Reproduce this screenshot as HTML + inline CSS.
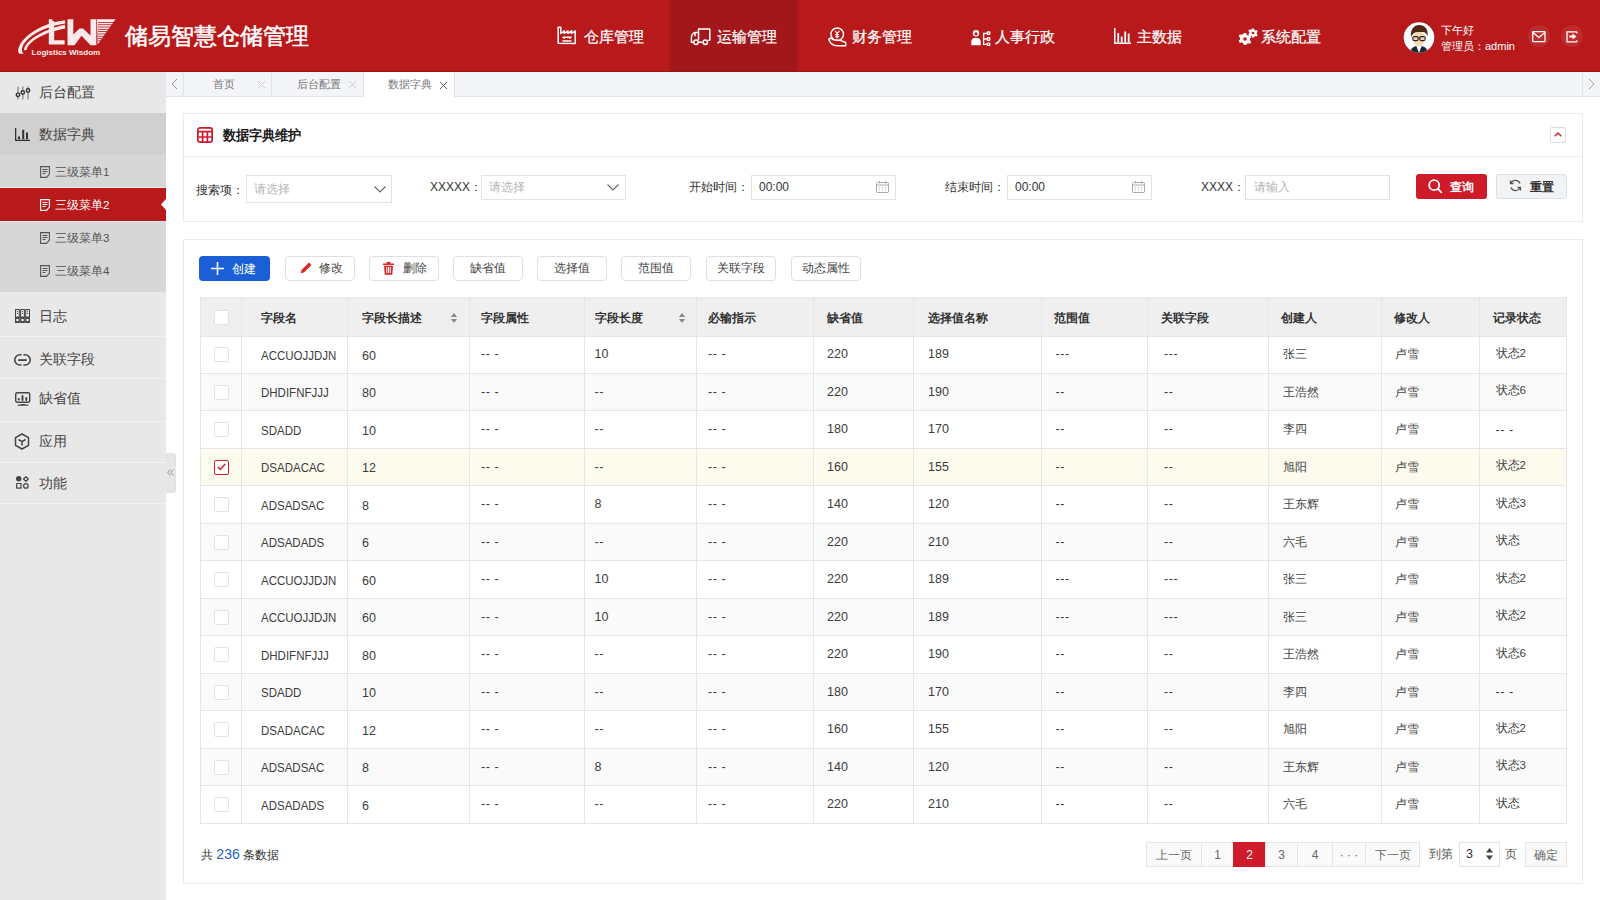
<!DOCTYPE html>
<html><head><meta charset="utf-8">
<style>
*{box-sizing:border-box;margin:0;padding:0}
html,body{width:1600px;height:900px;overflow:hidden;background:#fff;font-family:"Liberation Sans",sans-serif;color:#333}
.a{position:absolute;white-space:nowrap}
#hdr{position:absolute;left:0;top:0;width:1600px;height:72px;background:#b81a1c;border-bottom:1px solid #9c1315}
.navact{position:absolute;left:670px;top:0;width:128px;height:71px;background:#a2171a}
.nav{position:absolute;top:28px;height:18px;color:#fff;font-size:15px;line-height:18px;white-space:nowrap;-webkit-text-stroke:.25px #fff}
.ico{position:absolute;overflow:visible}
#side{position:absolute;left:0;top:72px;width:166px;height:828px;background:#e8e8e8}
.si{position:absolute;left:0;width:166px;color:#444;font-size:14px}
#tabs{position:absolute;left:166px;top:72px;width:1434px;height:25px;background:#f3f5f8;border-bottom:1px solid #e3e5e8}
.card{position:absolute;background:#fff;border:1px solid #ebebeb}
</style>
<style>
.sb{position:absolute;left:0;width:166px}
.st{position:absolute;left:39px;font-size:13.5px;line-height:16px;color:#444}
.sst{position:absolute;left:55px;font-size:11.6px;line-height:14px;color:#444}
.sep{position:absolute;left:0;width:166px;height:1px;background:#f3f3f3}
.tab{position:absolute;top:0;height:24px;border-right:1px solid #e1e4e8;font-size:10.5px;line-height:25px;color:#777}
.lbl{position:absolute;font-size:12px;line-height:14px;color:#333}
.inp{position:absolute;background:#fff;border:1px solid #e3e3e3}
.ph{position:absolute;font-size:12px;line-height:14px;color:#b5b5b5}
.btn{position:absolute;top:256px;width:70px;height:25px;border:1px solid #dcdfe6;border-radius:4px;background:#fff;font-size:11.5px;line-height:23px;color:#444;text-align:center}
.th{position:absolute;font-size:12px;line-height:14px;color:#333;font-weight:bold}
.td{position:absolute;font-size:12.5px;line-height:14px;color:#3c3c3c}
.tdc{position:absolute;font-size:11.5px;line-height:14px;color:#444}
.vl{position:absolute;width:1px;background:#e6e6e6}
.hl{position:absolute;height:1px;background:#e6e6e6}
.cb{position:absolute;left:214px;width:15px;height:15px;border:1px solid #e3e3e3;border-radius:2px;background:#fff}
.pg{position:absolute;top:842px;height:25px;border:1px solid #e6e6e6;background:#fafafa;font-size:12px;line-height:25px;color:#666;text-align:center}
</style>
</head><body>
<div id="hdr">
  <div class="navact"></div>
  <!-- logo -->
  <svg class="ico" style="left:10px;top:10px" width="115" height="52" viewBox="0 0 115 52">
    <g fill="#fbeaea">
      <path d="M38.8 9.3h3.6v1.6h1.8V30.2h10.4v4.3H38.8z"/>
      <path d="M57.5 9.3H63.3V24.5L69.5 18.5H73L80.5 25.5V9.3H86.3V35.2H80.5L71.5 25.8L64.5 35.2H57.5Z"/>
      <path d="M87 9.3h18.5L87.7 34.6z"/>
      <path d="M9.4 43.8C3.5 37 20 15 55 10.2l.3 3.4C26 18 9.5 33 12.4 42.2c.5 1 1.5 1.6 2.8 1.6z"/>
      <path d="M14.2 40.6C13 33 30 20 55 14.8l.3 3.6C34 22 17.2 32.5 16.8 39.8z"/>
    </g>
    <g fill="#b81a1c">
      <rect x="88" y="12" width="18" height="0.8"/><rect x="88" y="14.3" width="18" height="0.8"/><rect x="88" y="16.6" width="18" height="0.8"/>
      <rect x="88" y="18.9" width="18" height="0.8"/><rect x="88" y="21.2" width="18" height="0.8"/><rect x="88" y="23.5" width="18" height="0.8"/>
      <rect x="88" y="25.8" width="18" height="0.8"/><rect x="88" y="28.1" width="18" height="0.8"/><rect x="88" y="30.4" width="18" height="0.8"/>
    </g>
    <text x="21.6" y="44.6" fill="#fbeaea" font-family="Liberation Sans" font-weight="bold" font-size="8" textLength="68.6" lengthAdjust="spacingAndGlyphs">Logistics Wisdom</text>
  </svg>
  <div class="a" style="left:125px;top:21.5px;font-size:23.2px;line-height:28px;color:#fff;-webkit-text-stroke:.5px #fff">储易智慧仓储管理</div>

  <!-- nav: 仓库管理 -->
  <svg class="ico" style="left:557px;top:26px" width="20" height="19" viewBox="0 0 20 19" fill="none" stroke="#fff" stroke-width="1.5" stroke-linejoin="round">
    <path d="M1.2 17.3V1.2h2.6v6.3l3.6-2.6v2.6l3.6-2.6v2.6l3.6-2.6v2.6l3.6-2.6v12.5z"/><path d="M5.5 11.3h9M5.5 15h9M7 11.3v1.5M13 11.3v1.5"/>
  </svg>
  <div class="nav" style="left:584px">仓库管理</div>
  <!-- 运输管理 -->
  <svg class="ico" style="left:690px;top:28px" width="21" height="18" viewBox="0 0 21 18" fill="none" stroke="#fff" stroke-width="1.5" stroke-linejoin="round">
    <path d="M8.5 12.2V1h11.3v11.2h-1.5"/><path d="M8.5 4.5H5.2C2.8 4.8 1.4 7.5 1.4 10v4.2h2"/><path d="M8.8 14.2h3.6"/><circle cx="6" cy="14.2" r="2.2"/><circle cx="15.3" cy="14.2" r="2.2"/><path d="M5 4.8v3.5"/>
  </svg>
  <div class="nav" style="left:717px">运输管理</div>
  <!-- 财务管理 -->
  <svg class="ico" style="left:827px;top:27px" width="20" height="20" viewBox="0 0 20 20" fill="none" stroke="#fff" stroke-width="1.4" stroke-linejoin="round">
    <circle cx="10.2" cy="7.3" r="6.3"/><path d="M8 3.8l2.2 2.7 2.2-2.7M10.2 6.5v5M8.3 7.6h3.8M8.3 9.6h3.8" stroke-width="1.1"/>
    <path d="M1.8 12.2C3.2 16.6 6.2 18.7 10.5 18.7h8.2v-3.2l-5.5-2.2h-2.4C7.4 13.3 5.3 12.7 3.6 11z" fill="#b81a1c"/>
  </svg>
  <div class="nav" style="left:852px">财务管理</div>
  <!-- 人事行政 -->
  <svg class="ico" style="left:971px;top:28.5px" width="20" height="17" viewBox="0 0 20 17" fill="#fff">
    <circle cx="5" cy="4.3" r="3.2"/><circle cx="5" cy="4.8" r="1.6" fill="#b81a1c"/><path d="M.3 16.3v-3.8C.3 10.3 2 8.8 5 8.8s4.7 1.5 4.7 3.7v3.8z"/>
    <path d="M12.6 4.5h3M12.6 3.8v11.6h3M12.6 10h3" fill="none" stroke="#fff" stroke-width="1.3"/>
    <rect x="15.6" y="2.2" width="3.8" height="3.8" rx="1"/><rect x="15.6" y="8.1" width="3.8" height="3.8" rx="1"/><rect x="15.6" y="13.4" width="3.8" height="3.6" rx="1"/>
    <g fill="#b81a1c"><circle cx="17.5" cy="4.1" r=".7"/><circle cx="17.5" cy="10" r=".7"/><circle cx="17.5" cy="15.2" r=".7"/></g>
  </svg>
  <div class="nav" style="left:995px">人事行政</div>
  <!-- 主数据 -->
  <svg class="ico" style="left:1114px;top:28px" width="17" height="16" viewBox="0 0 17 16" fill="#fff">
    <rect x="0" y="0" width="1.5" height="16"/><rect x="0" y="14.5" width="17" height="1.5"/>
    <rect x="3.3" y="5" width="1.8" height="9.5"/><rect x="6.8" y="8.5" width="1.8" height="6"/><rect x="10.3" y="3.5" width="1.8" height="11"/><rect x="13.8" y="5.5" width="1.8" height="9"/>
  </svg>
  <div class="nav" style="left:1137px">主数据</div>
  <!-- 系统配置 -->
  <svg class="ico" style="left:1239px;top:28px" width="19" height="17" viewBox="0 0 19 17" fill="#fff">
    <g transform="translate(6,11)"><path d="M-1.2-6h2.4l.5 1.8 1.6.9 1.8-.6 1.2 2.1-1.3 1.3v1.9l1.3 1.3-1.2 2.1-1.8-.6-1.6.9L1.2 6h-2.4l-.5-1.8-1.6-.9-1.8.6-1.2-2.1 1.3-1.3v-1.9l-1.3-1.3 1.2-2.1 1.8.6 1.6-.9z"/><circle r="1.8" fill="#b81a1c"/></g>
    <g transform="translate(14,5) scale(.75)"><path d="M-1.2-6h2.4l.5 1.8 1.6.9 1.8-.6 1.2 2.1-1.3 1.3v1.9l1.3 1.3-1.2 2.1-1.8-.6-1.6.9L1.2 6h-2.4l-.5-1.8-1.6-.9-1.8.6-1.2-2.1 1.3-1.3v-1.9l-1.3-1.3 1.2-2.1 1.8.6 1.6-.9z"/><circle r="1.8" fill="#b81a1c"/></g>
  </svg>
  <div class="nav" style="left:1261px">系统配置</div>

  <!-- user -->
  <svg class="ico" style="left:1403px;top:21px" width="32" height="33" viewBox="0 0 32 33">
    <defs><clipPath id="avc"><circle cx="16" cy="16.5" r="15.3"/></clipPath></defs>
    <circle cx="16" cy="16.5" r="16" fill="#a8161a"/>
    <circle cx="16" cy="16.5" r="15.3" fill="#fff"/>
    <g clip-path="url(#avc)">
      <path d="M7.5 33C7.5 27 10.5 24.8 16 24.8S24.5 27 24.5 33z" fill="#1b2633"/><path d="M13.2 24.8L16 32l2.8-7.2z" fill="#fff"/>
    </g>
    <ellipse cx="16" cy="17.8" rx="6" ry="7" fill="#f4d8b0"/>
    <path d="M8 16C7 8.5 11 4 16.3 4 21.8 4 25.5 8 24.6 15.5 23.8 12.5 22 10.8 19 11 16 11.2 12.5 10.5 10.3 12.8 9.3 13.8 8.6 14.8 8 16z" fill="#4a2a15"/>
    <g fill="none" stroke="#222" stroke-width="1.1"><rect x="9.8" y="15.6" width="5.4" height="4" rx="1.5"/><rect x="16.8" y="15.6" width="5.4" height="4" rx="1.5"/><path d="M15.2 17h1.6"/></g>
  </svg>
  <div class="a" style="left:1441px;top:23px;font-size:11px;line-height:14px;color:#fff">下午好</div>
  <div class="a" style="left:1441px;top:39px;font-size:11px;line-height:14px;color:#fff">管理员：admin</div>
  <div class="a" style="left:1528px;top:25px;width:22px;height:22px;border-radius:50%;background:rgba(255,255,255,.08)"></div>
  <svg class="ico" style="left:1532px;top:30.5px" width="14" height="11.5" viewBox="0 0 14 11.5" fill="none" stroke="#fff" stroke-width="1.3"><rect x=".7" y=".7" width="12.3" height="10" rx=".6"/><path d="M1 1.6l5.9 5 5.9-5"/></svg>
  <div class="a" style="left:1561px;top:25px;width:22px;height:22px;border-radius:50%;background:rgba(255,255,255,.08)"></div>
  <svg class="ico" style="left:1566px;top:30.5px" width="12" height="12" viewBox="0 0 12 12"><path d="M10.8 .8H1v10h9.8M10.8 .8v1.6M10.8 9.2v1.6" fill="none" stroke="#fff" stroke-width="1.3"/><path d="M3.2 4.4h3.3V2.6l4 2.9-4 2.9V6.6H3.2z" fill="#fff"/></svg>
</div>


<div id="side"></div>
<div class="sb" style="top:113px;height:41px;background:#d0d0d0"></div>
<div class="sb" style="top:154px;height:138px;background:#d7d7d7"></div>
<div class="sb" style="top:188px;height:33px;background:#b81a1c"></div>
<div class="sb" style="top:187px;height:1px;background:#e2ebe8"></div>
<div class="sb" style="top:221px;height:1px;background:#e2ebe8"></div>
<svg class="ico" style="left:161px;top:199px" width="5" height="11"><path d="M5 0L0 5.5 5 11z" fill="#fff"/></svg>
<div class="sep" style="top:336px"></div>
<div class="sep" style="top:378px"></div>
<div class="sep" style="top:421px"></div>
<div class="sep" style="top:462px"></div>
<div class="sep" style="top:503px"></div>
<div class="sb" style="top:154px;height:1px;background:#d4d4d4"></div>
<svg class="ico" style="left:16px;top:85.5px" width="14" height="14" viewBox="0 0 14 14" fill="none" stroke-width="1.3">
<path d="M2 .5v13M6.8 .5v13M12 .5v13" stroke="#888"/><g stroke="#333" stroke-width="1.4" fill="#e8e8e8"><circle cx="2" cy="8.8" r="1.7"/><circle cx="6.8" cy="6.5" r="1.7"/><circle cx="12" cy="4.5" r="1.7"/></g></svg>
<div class="st" style="top:85px">后台配置</div>
<svg class="ico" style="left:15px;top:127.5px" width="15" height="13" viewBox="0 0 15 13" fill="#333">
<rect x="0" y="0" width="1.3" height="13"/><rect x="0" y="11.7" width="15" height="1.3"/><rect x="3" y="8.5" width="2" height="2.6"/><rect x="7.2" y="1.8" width="2" height="9.4"/><rect x="11" y="4.5" width="2" height="6.7"/></svg>
<div class="st" style="top:127px">数据字典</div>
<svg class="ico" style="left:40px;top:166px" width="10" height="12" viewBox="0 0 10 12" fill="none" stroke="#555" stroke-width="1.1"><path d="M.6.6h8.8v7.5L6.6 11.4H.6z"/><path d="M2.5 3.5h5M2.5 5.5h5M2.5 7.5h3"/></svg>
<div class="sst" style="top:165px;color:#555">三级菜单1</div>
<svg class="ico" style="left:40px;top:199px" width="10" height="12" viewBox="0 0 10 12" fill="none" stroke="#fff" stroke-width="1.1"><path d="M.6.6h8.8v7.5L6.6 11.4H.6z"/><path d="M2.5 3.5h5M2.5 5.5h5M2.5 7.5h3"/></svg>
<div class="sst" style="top:198px;color:#fff">三级菜单2</div>
<svg class="ico" style="left:40px;top:232px" width="10" height="12" viewBox="0 0 10 12" fill="none" stroke="#555" stroke-width="1.1"><path d="M.6.6h8.8v7.5L6.6 11.4H.6z"/><path d="M2.5 3.5h5M2.5 5.5h5M2.5 7.5h3"/></svg>
<div class="sst" style="top:231px;color:#555">三级菜单3</div>
<svg class="ico" style="left:40px;top:265px" width="10" height="12" viewBox="0 0 10 12" fill="none" stroke="#555" stroke-width="1.1"><path d="M.6.6h8.8v7.5L6.6 11.4H.6z"/><path d="M2.5 3.5h5M2.5 5.5h5M2.5 7.5h3"/></svg>
<div class="sst" style="top:264px;color:#555">三级菜单4</div>
<svg class="ico" style="left:15px;top:309px" width="15" height="14" viewBox="0 0 15 14">
<g fill="#444"><rect x="0" y="0" width="4.8" height="14" rx=".6"/><rect x="5.1" y="0" width="4.8" height="14" rx=".6"/><rect x="10.2" y="0" width="4.8" height="14" rx=".6"/></g>
<g fill="#fff"><rect x="1.1" y="1.1" width="2.6" height="6.4"/><rect x="6.2" y="1.1" width="2.6" height="6.4"/><rect x="11.3" y="1.1" width="2.6" height="6.4"/>
<circle cx="2.4" cy="11" r="1.2"/><circle cx="7.5" cy="11" r="1.2"/><circle cx="12.6" cy="11" r="1.2"/></g>
<g fill="#444"><circle cx="2.4" cy="2.6" r=".6"/><circle cx="2.4" cy="4.4" r=".6"/><circle cx="7.5" cy="2.6" r=".6"/><circle cx="7.5" cy="4.4" r=".6"/><circle cx="12.6" cy="2.6" r=".6"/><circle cx="12.6" cy="4.4" r=".6"/></g></svg>
<div class="st" style="top:309px">日志</div>
<svg class="ico" style="left:14px;top:354px" width="17" height="12" viewBox="0 0 17 12" fill="none" stroke="#444" stroke-width="1.6">
<path d="M7.6 .8H5.9a5.1 5.1 0 0 0 0 10.2H7.6M9.4 .8h1.7a5.1 5.1 0 0 1 0 10.2H9.4"/><path d="M4.2 6.1h8.6" stroke-width="1.8"/></svg>
<div class="st" style="top:352px">关联字段</div>
<svg class="ico" style="left:14px;top:391px" width="17" height="16" viewBox="0 0 17 16" fill="none" stroke="#444" stroke-width="1.4" stroke-linecap="round">
<rect x="1.7" y="1.7" width="14" height="9.6" rx="1.6"/><path d="M4.8 8v.6M8.5 5v4M12.3 7v2" stroke-width="2"/><path d="M4.2 14.2h9.6" stroke-width="1.2"/><path d="M7.5 13.5h3" stroke-width="1"/></svg>
<div class="st" style="top:391px">缺省值</div>
<svg class="ico" style="left:14px;top:433px" width="16" height="17" viewBox="0 0 16 17" fill="none" stroke="#444" stroke-width="1.5" stroke-linejoin="round">
<path d="M8 1l6.5 3.7v7.6L8 16 1.5 12.3V4.7z"/><path d="M4.5 6.5L8 8.6l3.5-2.1M8 8.6v4"/></svg>
<div class="st" style="top:434px">应用</div>
<svg class="ico" style="left:16px;top:476px" width="13" height="13" viewBox="0 0 13 13" fill="none" stroke="#444" stroke-width="1.2" stroke-linejoin="round">
<circle cx="2.7" cy="2.8" r="2.7" fill="#444" stroke="none"/><path d="M9.9 .7l2.4 2.3-2.4 2.3L7.5 3z"/><rect x=".7" y="7.5" width="4.3" height="4.6"/><circle cx="9.9" cy="9.9" r="2.3"/></svg>
<div class="st" style="top:476px">功能</div>
<div class="a" style="left:166px;top:453px;width:10px;height:40px;background:#e6e6e6;border-radius:0 3px 3px 0;border:1px solid #e2e2e2;border-left:none"></div>
<svg class="ico" style="left:167px;top:469px" width="7" height="7" viewBox="0 0 7 7" fill="none" stroke="#888" stroke-width=".9"><path d="M3.5 .5L.8 3.5l2.7 3M6.5 .5L3.8 3.5l2.7 3"/></svg>
<div id="tabs">
<div class="tab" style="left:0;width:18px"></div>
<svg class="ico" style="left:5px;top:6px" width="7" height="12" viewBox="0 0 7 12" fill="none" stroke="#999" stroke-width="1"><path d="M6 1L1 6l5 5"/></svg>
<div class="tab" style="left:18px;width:88px"><span class="a" style="left:29px">首页</span><svg class="ico" style="left:74px;top:9px" width="7" height="7" viewBox="0 0 8 8" stroke="#c8c8c8" stroke-width="1"><path d="M0 0L8 8M8 0L0 8"/></svg></div>
<div class="tab" style="left:106px;width:92px"><span class="a" style="left:25px">后台配置</span><svg class="ico" style="left:77px;top:9px" width="7" height="7" viewBox="0 0 8 8" stroke="#c8c8c8" stroke-width="1"><path d="M0 0L8 8M8 0L0 8"/></svg></div>
<div class="tab" style="left:198px;width:91px;background:#fff;height:25px"><span class="a" style="left:24px">数据字典</span><svg class="ico" style="left:76px;top:10px" width="7" height="7" viewBox="0 0 8 8" stroke="#555" stroke-width="1.1"><path d="M0 0L8 8M8 0L0 8"/></svg></div>
<div class="tab" style="left:1416px;width:18px;border-left:1px solid #e1e4e8;border-right:none"></div>
<svg class="ico" style="left:1422px;top:6px" width="7" height="12" viewBox="0 0 7 12" fill="none" stroke="#999" stroke-width="1"><path d="M1 1l5 5-5 5"/></svg>
</div>
<div class="card" style="left:183px;top:113px;width:1400px;height:109px"></div>
<div class="hl" style="left:184px;top:156px;width:1398px;background:#ececec"></div>
<svg class="ico" style="left:196.5px;top:127px" width="16" height="16" viewBox="0 0 16 16" fill="none" stroke="#d3172b" stroke-width="1.7">
<rect x=".85" y=".85" width="14.3" height="14.3" rx="2.2"/><path d="M.85 4.6h14.3M.85 10h14.3M5.6 4.6v10.5M10.4 4.6v10.5"/></svg>
<div class="a" style="left:223px;top:126.5px;font-size:13.1px;line-height:16px;color:#1a1a1a;font-weight:bold;transform:scaleY(1.06);transform-origin:0 0">数据字典维护</div>
<div class="a" style="left:1550px;top:127px;width:16px;height:16px;border:1px solid #dcdcdc;border-radius:2px"></div>
<svg class="ico" style="left:1554px;top:132px" width="8" height="5" viewBox="0 0 8 5" fill="none" stroke="#d0212b" stroke-width="1.4"><path d="M.7 4.3L4 1l3.3 3.3"/></svg>
<div class="lbl" style="left:196px;top:183px">搜索项：</div>
<div class="inp" style="left:246px;top:175px;width:146px;height:28px"></div>
<div class="ph" style="left:254px;top:182px">请选择</div>
<svg class="ico" style="left:374px;top:186px" width="12" height="7" viewBox="0 0 12 7" fill="none" stroke="#666" stroke-width="1.1"><path d="M.5.5L6 6 11.5.5"/></svg>
<div class="lbl" style="left:430px;top:180px">XXXXX：</div>
<div class="inp" style="left:481px;top:175px;width:145px;height:25px"></div>
<div class="ph" style="left:489px;top:180px">请选择</div>
<svg class="ico" style="left:607px;top:184px" width="12" height="7" viewBox="0 0 12 7" fill="none" stroke="#666" stroke-width="1.1"><path d="M.5.5L6 6 11.5.5"/></svg>
<div class="lbl" style="left:689px;top:180px">开始时间：</div>
<div class="inp" style="left:751px;top:175px;width:145px;height:25px"></div>
<div class="a" style="left:759px;top:180px;font-size:12px;line-height:14px;color:#333">00:00</div>
<svg class="ico" style="left:876px;top:181px" width="13" height="12" viewBox="0 0 13 12" fill="none" stroke="#aaa" stroke-width="1"><rect x=".5" y="1.5" width="12" height="10" rx="1"/><path d="M.5 4h12M3.5 0v2.5M9.5 0v2.5"/><path d="M3 6.5h1M6 6.5h1M9 6.5h1M3 9h1M6 9h1M9 9h1" stroke-width=".9"/></svg>
<div class="lbl" style="left:945px;top:180px">结束时间：</div>
<div class="inp" style="left:1007px;top:175px;width:145px;height:25px"></div>
<div class="a" style="left:1015px;top:180px;font-size:12px;line-height:14px;color:#333">00:00</div>
<svg class="ico" style="left:1132px;top:181px" width="13" height="12" viewBox="0 0 13 12" fill="none" stroke="#aaa" stroke-width="1"><rect x=".5" y="1.5" width="12" height="10" rx="1"/><path d="M.5 4h12M3.5 0v2.5M9.5 0v2.5"/><path d="M3 6.5h1M6 6.5h1M9 6.5h1M3 9h1M6 9h1M9 9h1" stroke-width=".9"/></svg>
<div class="lbl" style="left:1201px;top:180px">XXXX：</div>
<div class="inp" style="left:1245px;top:175px;width:145px;height:25px"></div>
<div class="ph" style="left:1254px;top:180px">请输入</div>
<div class="a" style="left:1416px;top:174px;width:71px;height:25px;background:#cf1a2a;border-radius:3px"></div>
<svg class="ico" style="left:1428px;top:179px" width="15" height="15" viewBox="0 0 15 15" fill="none" stroke="#fff" stroke-width="1.8"><circle cx="6.2" cy="6.2" r="5"/><path d="M9.8 9.8L13.8 13.8"/></svg>
<div class="a" style="left:1450px;top:180px;font-size:12px;line-height:14px;color:#fff;font-weight:bold">查询</div>
<div class="a" style="left:1496px;top:174px;width:71px;height:25px;background:#f2f3f5;border:1px solid #dcdfe3;border-radius:3px"></div>
<svg class="ico" style="left:1509px;top:179px" width="13" height="13" viewBox="0 0 13 13" fill="none" stroke="#555" stroke-width="1.3"><path d="M11 4.5A5 5 0 0 0 2 4M2 8.5A5 5 0 0 0 11 9"/><path d="M1.5 1.5V4.5H4.5M11.5 11.5V8.5H8.5"/></svg>
<div class="a" style="left:1530px;top:180px;font-size:12px;line-height:14px;color:#333;font-weight:bold">重置</div>
<div class="card" style="left:183px;top:239px;width:1400px;height:645px"></div>
<div class="a" style="left:199px;top:256px;width:71px;height:25px;background:#1a5fd6;border-radius:4px"></div>
<svg class="ico" style="left:211px;top:262px" width="13" height="13" viewBox="0 0 13 13" fill="none" stroke="#fff" stroke-width="1.6"><path d="M6.5 0v13M0 6.5h13"/></svg>
<div class="a" style="left:232px;top:262px;font-size:11.5px;line-height:14px;color:#fff">创建</div>
<div class="btn" style="left:284.5px;text-align:left;padding-left:33px">修改</div>
<div class="btn" style="left:368.5px;text-align:left;padding-left:33px">删除</div>
<div class="btn" style="left:452.5px">缺省值</div>
<div class="btn" style="left:536.5px">选择值</div>
<div class="btn" style="left:621px">范围值</div>
<div class="btn" style="left:706px">关联字段</div>
<div class="btn" style="left:790.5px">动态属性</div>
<svg class="ico" style="left:300px;top:262px" width="12" height="12" viewBox="0 0 12 12"><path d="M9 .5l2.5 2.5L4 10.5 .8 11.2 1.5 8z" fill="#d42a2a"/></svg>
<svg class="ico" style="left:383px;top:262px" width="11" height="13" viewBox="0 0 11 13" fill="#d42a2a"><rect x="0" y="1.5" width="11" height="1.5"/><rect x="3.5" y="0" width="4" height="2"/><path d="M1 3.8h9l-.7 9H1.7z"/><g fill="#fff"><rect x="3.3" y="5" width="1" height="6"/><rect x="5" y="5" width="1" height="6"/><rect x="6.7" y="5" width="1" height="6"/></g></svg>
<div class="a" style="left:200px;top:297px;width:1366px;height:39px;background:#efefef"></div>
<div class="a" style="left:200px;top:336.00px;width:1366px;height:37.48px;background:#fff"></div>
<div class="a" style="left:200px;top:373.48px;width:1366px;height:37.48px;background:#fafafa"></div>
<div class="a" style="left:200px;top:410.97px;width:1366px;height:37.48px;background:#fff"></div>
<div class="a" style="left:200px;top:448.45px;width:1366px;height:37.48px;background:#fcfbee"></div>
<div class="a" style="left:200px;top:485.94px;width:1366px;height:37.48px;background:#fff"></div>
<div class="a" style="left:200px;top:523.42px;width:1366px;height:37.48px;background:#fafafa"></div>
<div class="a" style="left:200px;top:560.91px;width:1366px;height:37.48px;background:#fff"></div>
<div class="a" style="left:200px;top:598.39px;width:1366px;height:37.48px;background:#fafafa"></div>
<div class="a" style="left:200px;top:635.88px;width:1366px;height:37.48px;background:#fff"></div>
<div class="a" style="left:200px;top:673.36px;width:1366px;height:37.48px;background:#fafafa"></div>
<div class="a" style="left:200px;top:710.85px;width:1366px;height:37.48px;background:#fff"></div>
<div class="a" style="left:200px;top:748.33px;width:1366px;height:37.48px;background:#fafafa"></div>
<div class="a" style="left:200px;top:785.82px;width:1366px;height:37.48px;background:#fff"></div>
<div class="hl" style="left:200px;top:335.50px;width:1366px"></div>
<div class="hl" style="left:200px;top:372.98px;width:1366px"></div>
<div class="hl" style="left:200px;top:410.47px;width:1366px"></div>
<div class="hl" style="left:200px;top:447.95px;width:1366px"></div>
<div class="hl" style="left:200px;top:485.44px;width:1366px"></div>
<div class="hl" style="left:200px;top:522.92px;width:1366px"></div>
<div class="hl" style="left:200px;top:560.41px;width:1366px"></div>
<div class="hl" style="left:200px;top:597.89px;width:1366px"></div>
<div class="hl" style="left:200px;top:635.38px;width:1366px"></div>
<div class="hl" style="left:200px;top:672.86px;width:1366px"></div>
<div class="hl" style="left:200px;top:710.35px;width:1366px"></div>
<div class="hl" style="left:200px;top:747.83px;width:1366px"></div>
<div class="hl" style="left:200px;top:785.32px;width:1366px"></div>
<div class="hl" style="left:200px;top:822.80px;width:1366px"></div>
<div class="hl" style="left:200px;top:296.5px;width:1366px;background:#e9e9e9"></div>
<div class="vl" style="left:200px;top:297px;height:526.3px"></div>
<div class="vl" style="left:241px;top:297px;height:526.3px"></div>
<div class="vl" style="left:347px;top:297px;height:526.3px"></div>
<div class="vl" style="left:469px;top:297px;height:526.3px"></div>
<div class="vl" style="left:584px;top:297px;height:526.3px"></div>
<div class="vl" style="left:696px;top:297px;height:526.3px"></div>
<div class="vl" style="left:812.5px;top:297px;height:526.3px"></div>
<div class="vl" style="left:913px;top:297px;height:526.3px"></div>
<div class="vl" style="left:1041px;top:297px;height:526.3px"></div>
<div class="vl" style="left:1147px;top:297px;height:526.3px"></div>
<div class="vl" style="left:1268px;top:297px;height:526.3px"></div>
<div class="vl" style="left:1381px;top:297px;height:526.3px"></div>
<div class="vl" style="left:1479px;top:297px;height:526.3px"></div>
<div class="vl" style="left:1566px;top:297px;height:526.3px"></div>
<div class="th" style="left:260.5px;top:311px">字段名</div>
<div class="th" style="left:362px;top:311px">字段长描述</div>
<div class="th" style="left:481px;top:311px">字段属性</div>
<div class="th" style="left:594.5px;top:311px">字段长度</div>
<div class="th" style="left:708px;top:311px">必输指示</div>
<div class="th" style="left:827px;top:311px">缺省值</div>
<div class="th" style="left:928px;top:311px">选择值名称</div>
<div class="th" style="left:1054px;top:311px">范围值</div>
<div class="th" style="left:1161px;top:311px">关联字段</div>
<div class="th" style="left:1281px;top:311px">创建人</div>
<div class="th" style="left:1393.5px;top:311px">修改人</div>
<div class="th" style="left:1493px;top:311px">记录状态</div>
<div class="cb" style="top:310px"></div>
<svg class="ico" style="left:451px;top:313px" width="6" height="10" viewBox="0 0 6 10" fill="#888"><path d="M3 0L6 4H0zM3 10L0 6h6z"/></svg>
<svg class="ico" style="left:679px;top:313px" width="6" height="10" viewBox="0 0 6 10" fill="#888"><path d="M3 0L6 4H0zM3 10L0 6h6z"/></svg>
<div class="cb" style="top:347.24px"></div>
<div class="td" style="left:260.5px;top:348.74px;font-size:13px;transform:scaleX(.885);transform-origin:0 0">ACCUOJJDJN</div>
<div class="td" style="left:362px;top:348.74px">60</div>
<div class="td" style="left:481px;top:347.24px;letter-spacing:.6px">-- -</div>
<div class="td" style="left:594.5px;top:347.24px">10</div>
<div class="td" style="left:708px;top:347.24px;letter-spacing:.6px">-- -</div>
<div class="td" style="left:827px;top:347.24px">220</div>
<div class="td" style="left:928px;top:347.24px">189</div>
<div class="td" style="left:1055.5px;top:347.24px;letter-spacing:.6px">---</div>
<div class="td" style="left:1164px;top:347.24px;letter-spacing:.6px">---</div>
<div class="tdc" style="left:1282.5px;top:347.24px">张三</div>
<div class="tdc" style="left:1395.0px;top:347.24px">卢雪</div>
<div class="tdc" style="left:1495.5px;top:345.74px">状态2</div>
<div class="cb" style="top:384.73px"></div>
<div class="td" style="left:260.5px;top:386.23px;font-size:13px;transform:scaleX(.885);transform-origin:0 0">DHDIFNFJJJ</div>
<div class="td" style="left:362px;top:386.23px">80</div>
<div class="td" style="left:481px;top:384.73px;letter-spacing:.6px">-- -</div>
<div class="td" style="left:594.5px;top:384.73px;letter-spacing:.6px">--</div>
<div class="td" style="left:708px;top:384.73px;letter-spacing:.6px">-- -</div>
<div class="td" style="left:827px;top:384.73px">220</div>
<div class="td" style="left:928px;top:384.73px">190</div>
<div class="td" style="left:1055.5px;top:384.73px;letter-spacing:.6px">--</div>
<div class="td" style="left:1164px;top:384.73px;letter-spacing:.6px">--</div>
<div class="tdc" style="left:1282.5px;top:384.73px">王浩然</div>
<div class="tdc" style="left:1395.0px;top:384.73px">卢雪</div>
<div class="tdc" style="left:1495.5px;top:383.23px">状态6</div>
<div class="cb" style="top:422.21px"></div>
<div class="td" style="left:260.5px;top:423.71px;font-size:13px;transform:scaleX(.885);transform-origin:0 0">SDADD</div>
<div class="td" style="left:362px;top:423.71px">10</div>
<div class="td" style="left:481px;top:422.21px;letter-spacing:.6px">-- -</div>
<div class="td" style="left:594.5px;top:422.21px;letter-spacing:.6px">--</div>
<div class="td" style="left:708px;top:422.21px;letter-spacing:.6px">-- -</div>
<div class="td" style="left:827px;top:422.21px">180</div>
<div class="td" style="left:928px;top:422.21px">170</div>
<div class="td" style="left:1055.5px;top:422.21px;letter-spacing:.6px">--</div>
<div class="td" style="left:1164px;top:422.21px;letter-spacing:.6px">--</div>
<div class="tdc" style="left:1282.5px;top:422.21px">李四</div>
<div class="tdc" style="left:1395.0px;top:422.21px">卢雪</div>
<div class="td" style="left:1495.5px;top:422.71px;letter-spacing:.6px">-- -</div>
<div class="cb" style="top:459.70px;border-color:#d0212b"></div>
<svg class="ico" style="left:217px;top:463.20px" width="9" height="8" viewBox="0 0 9 8" fill="none" stroke="#d0212b" stroke-width="1.5"><path d="M.8 4l2.5 2.5L8.2 1"/></svg>
<div class="td" style="left:260.5px;top:461.20px;font-size:13px;transform:scaleX(.885);transform-origin:0 0">DSADACAC</div>
<div class="td" style="left:362px;top:461.20px">12</div>
<div class="td" style="left:481px;top:459.70px;letter-spacing:.6px">-- -</div>
<div class="td" style="left:594.5px;top:459.70px;letter-spacing:.6px">--</div>
<div class="td" style="left:708px;top:459.70px;letter-spacing:.6px">-- -</div>
<div class="td" style="left:827px;top:459.70px">160</div>
<div class="td" style="left:928px;top:459.70px">155</div>
<div class="td" style="left:1055.5px;top:459.70px;letter-spacing:.6px">--</div>
<div class="td" style="left:1164px;top:459.70px;letter-spacing:.6px">--</div>
<div class="tdc" style="left:1282.5px;top:459.70px">旭阳</div>
<div class="tdc" style="left:1395.0px;top:459.70px">卢雪</div>
<div class="tdc" style="left:1495.5px;top:458.20px">状态2</div>
<div class="cb" style="top:497.18px"></div>
<div class="td" style="left:260.5px;top:498.68px;font-size:13px;transform:scaleX(.885);transform-origin:0 0">ADSADSAC</div>
<div class="td" style="left:362px;top:498.68px">8</div>
<div class="td" style="left:481px;top:497.18px;letter-spacing:.6px">-- -</div>
<div class="td" style="left:594.5px;top:497.18px">8</div>
<div class="td" style="left:708px;top:497.18px;letter-spacing:.6px">-- -</div>
<div class="td" style="left:827px;top:497.18px">140</div>
<div class="td" style="left:928px;top:497.18px">120</div>
<div class="td" style="left:1055.5px;top:497.18px;letter-spacing:.6px">--</div>
<div class="td" style="left:1164px;top:497.18px;letter-spacing:.6px">--</div>
<div class="tdc" style="left:1282.5px;top:497.18px">王东辉</div>
<div class="tdc" style="left:1395.0px;top:497.18px">卢雪</div>
<div class="tdc" style="left:1495.5px;top:495.68px">状态3</div>
<div class="cb" style="top:534.67px"></div>
<div class="td" style="left:260.5px;top:536.17px;font-size:13px;transform:scaleX(.885);transform-origin:0 0">ADSADADS</div>
<div class="td" style="left:362px;top:536.17px">6</div>
<div class="td" style="left:481px;top:534.67px;letter-spacing:.6px">-- -</div>
<div class="td" style="left:594.5px;top:534.67px;letter-spacing:.6px">--</div>
<div class="td" style="left:708px;top:534.67px;letter-spacing:.6px">-- -</div>
<div class="td" style="left:827px;top:534.67px">220</div>
<div class="td" style="left:928px;top:534.67px">210</div>
<div class="td" style="left:1055.5px;top:534.67px;letter-spacing:.6px">--</div>
<div class="td" style="left:1164px;top:534.67px;letter-spacing:.6px">--</div>
<div class="tdc" style="left:1282.5px;top:534.67px">六毛</div>
<div class="tdc" style="left:1395.0px;top:534.67px">卢雪</div>
<div class="tdc" style="left:1495.5px;top:533.17px">状态</div>
<div class="cb" style="top:572.15px"></div>
<div class="td" style="left:260.5px;top:573.65px;font-size:13px;transform:scaleX(.885);transform-origin:0 0">ACCUOJJDJN</div>
<div class="td" style="left:362px;top:573.65px">60</div>
<div class="td" style="left:481px;top:572.15px;letter-spacing:.6px">-- -</div>
<div class="td" style="left:594.5px;top:572.15px">10</div>
<div class="td" style="left:708px;top:572.15px;letter-spacing:.6px">-- -</div>
<div class="td" style="left:827px;top:572.15px">220</div>
<div class="td" style="left:928px;top:572.15px">189</div>
<div class="td" style="left:1055.5px;top:572.15px;letter-spacing:.6px">---</div>
<div class="td" style="left:1164px;top:572.15px;letter-spacing:.6px">---</div>
<div class="tdc" style="left:1282.5px;top:572.15px">张三</div>
<div class="tdc" style="left:1395.0px;top:572.15px">卢雪</div>
<div class="tdc" style="left:1495.5px;top:570.65px">状态2</div>
<div class="cb" style="top:609.63px"></div>
<div class="td" style="left:260.5px;top:611.13px;font-size:13px;transform:scaleX(.885);transform-origin:0 0">ACCUOJJDJN</div>
<div class="td" style="left:362px;top:611.13px">60</div>
<div class="td" style="left:481px;top:609.63px;letter-spacing:.6px">-- -</div>
<div class="td" style="left:594.5px;top:609.63px">10</div>
<div class="td" style="left:708px;top:609.63px;letter-spacing:.6px">-- -</div>
<div class="td" style="left:827px;top:609.63px">220</div>
<div class="td" style="left:928px;top:609.63px">189</div>
<div class="td" style="left:1055.5px;top:609.63px;letter-spacing:.6px">---</div>
<div class="td" style="left:1164px;top:609.63px;letter-spacing:.6px">---</div>
<div class="tdc" style="left:1282.5px;top:609.63px">张三</div>
<div class="tdc" style="left:1395.0px;top:609.63px">卢雪</div>
<div class="tdc" style="left:1495.5px;top:608.13px">状态2</div>
<div class="cb" style="top:647.12px"></div>
<div class="td" style="left:260.5px;top:648.62px;font-size:13px;transform:scaleX(.885);transform-origin:0 0">DHDIFNFJJJ</div>
<div class="td" style="left:362px;top:648.62px">80</div>
<div class="td" style="left:481px;top:647.12px;letter-spacing:.6px">-- -</div>
<div class="td" style="left:594.5px;top:647.12px;letter-spacing:.6px">--</div>
<div class="td" style="left:708px;top:647.12px;letter-spacing:.6px">-- -</div>
<div class="td" style="left:827px;top:647.12px">220</div>
<div class="td" style="left:928px;top:647.12px">190</div>
<div class="td" style="left:1055.5px;top:647.12px;letter-spacing:.6px">--</div>
<div class="td" style="left:1164px;top:647.12px;letter-spacing:.6px">--</div>
<div class="tdc" style="left:1282.5px;top:647.12px">王浩然</div>
<div class="tdc" style="left:1395.0px;top:647.12px">卢雪</div>
<div class="tdc" style="left:1495.5px;top:645.62px">状态6</div>
<div class="cb" style="top:684.60px"></div>
<div class="td" style="left:260.5px;top:686.10px;font-size:13px;transform:scaleX(.885);transform-origin:0 0">SDADD</div>
<div class="td" style="left:362px;top:686.10px">10</div>
<div class="td" style="left:481px;top:684.60px;letter-spacing:.6px">-- -</div>
<div class="td" style="left:594.5px;top:684.60px;letter-spacing:.6px">--</div>
<div class="td" style="left:708px;top:684.60px;letter-spacing:.6px">-- -</div>
<div class="td" style="left:827px;top:684.60px">180</div>
<div class="td" style="left:928px;top:684.60px">170</div>
<div class="td" style="left:1055.5px;top:684.60px;letter-spacing:.6px">--</div>
<div class="td" style="left:1164px;top:684.60px;letter-spacing:.6px">--</div>
<div class="tdc" style="left:1282.5px;top:684.60px">李四</div>
<div class="tdc" style="left:1395.0px;top:684.60px">卢雪</div>
<div class="td" style="left:1495.5px;top:685.10px;letter-spacing:.6px">-- -</div>
<div class="cb" style="top:722.09px"></div>
<div class="td" style="left:260.5px;top:723.59px;font-size:13px;transform:scaleX(.885);transform-origin:0 0">DSADACAC</div>
<div class="td" style="left:362px;top:723.59px">12</div>
<div class="td" style="left:481px;top:722.09px;letter-spacing:.6px">-- -</div>
<div class="td" style="left:594.5px;top:722.09px;letter-spacing:.6px">--</div>
<div class="td" style="left:708px;top:722.09px;letter-spacing:.6px">-- -</div>
<div class="td" style="left:827px;top:722.09px">160</div>
<div class="td" style="left:928px;top:722.09px">155</div>
<div class="td" style="left:1055.5px;top:722.09px;letter-spacing:.6px">--</div>
<div class="td" style="left:1164px;top:722.09px;letter-spacing:.6px">--</div>
<div class="tdc" style="left:1282.5px;top:722.09px">旭阳</div>
<div class="tdc" style="left:1395.0px;top:722.09px">卢雪</div>
<div class="tdc" style="left:1495.5px;top:720.59px">状态2</div>
<div class="cb" style="top:759.57px"></div>
<div class="td" style="left:260.5px;top:761.07px;font-size:13px;transform:scaleX(.885);transform-origin:0 0">ADSADSAC</div>
<div class="td" style="left:362px;top:761.07px">8</div>
<div class="td" style="left:481px;top:759.57px;letter-spacing:.6px">-- -</div>
<div class="td" style="left:594.5px;top:759.57px">8</div>
<div class="td" style="left:708px;top:759.57px;letter-spacing:.6px">-- -</div>
<div class="td" style="left:827px;top:759.57px">140</div>
<div class="td" style="left:928px;top:759.57px">120</div>
<div class="td" style="left:1055.5px;top:759.57px;letter-spacing:.6px">--</div>
<div class="td" style="left:1164px;top:759.57px;letter-spacing:.6px">--</div>
<div class="tdc" style="left:1282.5px;top:759.57px">王东辉</div>
<div class="tdc" style="left:1395.0px;top:759.57px">卢雪</div>
<div class="tdc" style="left:1495.5px;top:758.07px">状态3</div>
<div class="cb" style="top:797.06px"></div>
<div class="td" style="left:260.5px;top:798.56px;font-size:13px;transform:scaleX(.885);transform-origin:0 0">ADSADADS</div>
<div class="td" style="left:362px;top:798.56px">6</div>
<div class="td" style="left:481px;top:797.06px;letter-spacing:.6px">-- -</div>
<div class="td" style="left:594.5px;top:797.06px;letter-spacing:.6px">--</div>
<div class="td" style="left:708px;top:797.06px;letter-spacing:.6px">-- -</div>
<div class="td" style="left:827px;top:797.06px">220</div>
<div class="td" style="left:928px;top:797.06px">210</div>
<div class="td" style="left:1055.5px;top:797.06px;letter-spacing:.6px">--</div>
<div class="td" style="left:1164px;top:797.06px;letter-spacing:.6px">--</div>
<div class="tdc" style="left:1282.5px;top:797.06px">六毛</div>
<div class="tdc" style="left:1395.0px;top:797.06px">卢雪</div>
<div class="tdc" style="left:1495.5px;top:795.56px">状态</div>
<div class="a" style="left:201px;top:846px;font-size:12px;line-height:16px;color:#333">共 <span style="color:#2162c9;font-size:14px">236</span> <span style="font-size:11.5px">条数据</span></div>
<div class="pg" style="left:1146px;width:56px;">上一页</div>
<div class="pg" style="left:1201px;width:33px;">1</div>
<div class="pg" style="left:1233px;width:33px;background:#cf1a2a;border-color:#cf1a2a;color:#fff">2</div>
<div class="pg" style="left:1265px;width:33px;">3</div>
<div class="pg" style="left:1297px;width:36px;">4</div>
<div class="pg" style="left:1332px;width:34px;">· · ·</div>
<div class="pg" style="left:1365px;width:55px;">下一页</div>
<div class="a" style="left:1429px;top:847px;font-size:12px;line-height:14px;color:#555">到第</div>
<div class="a" style="left:1459px;top:842px;width:41px;height:25px;border:1px solid #e3e3e3;background:#fff"></div>
<div class="a" style="left:1466px;top:847px;font-size:12.5px;line-height:14px;color:#333">3</div>
<svg class="ico" style="left:1486px;top:848px" width="7" height="12" viewBox="0 0 7 12" fill="#444"><path d="M3.5 0L7 4.5H0zM3.5 12L0 7.5h7z"/></svg>
<div class="a" style="left:1505px;top:847px;font-size:12px;line-height:14px;color:#555">页</div>
<div class="pg" style="left:1525px;width:42px">确定</div>
</body></html>
